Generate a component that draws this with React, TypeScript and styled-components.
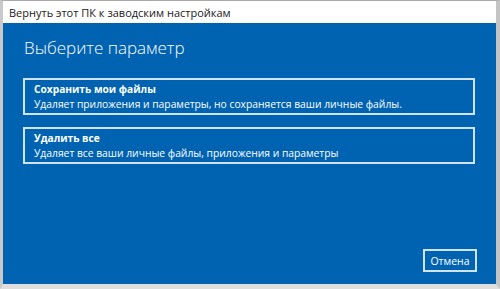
import React from "react";
import styled, { createGlobalStyle } from "styled-components";

const GlobalStyle = createGlobalStyle`
  html, body {
    margin: 0;
    padding: 0;
    background: #ffffff;
  }
  body {
    font-family: "Open Sans", "Noto Sans", "Liberation Sans", sans-serif;
  }
`;

const options = [
  {
    title: "Сохранить мои файлы",
    text: "Удаляет приложения и параметры, но сохраняется ваши личные файлы.",
  },
  {
    title: "Удалить все",
    text: "Удаляет все ваши личные файлы, приложения и параметры",
  },
];

const App = () => {
  return (
    <>
      <GlobalStyle />
      <Window>
        <TitleBar>Вернуть этот ПК к заводским настройкам</TitleBar>
        <Panel>
          <Heading>Выберите параметр</Heading>
          <OptionList>
            {options.map((item, index) => (
              <Option key={index}>
                <OptionTitle>{item.title}</OptionTitle>
                <OptionText>{item.text}</OptionText>
              </Option>
            ))}
          </OptionList>
          <Footer>
            <CancelButton>Отмена</CancelButton>
          </Footer>
        </Panel>
      </Window>
    </>
  );
};

const Window = styled.div`
  box-sizing: border-box;
  width: 500px;
  height: 289px;
  display: flex;
  flex-direction: column;
  background: #f2f2f2;
  border-top: 1px solid #a9a9a9;
  border-left: 3px solid #c9c9c9;
  border-right: 4px solid #c4c4c4;
  border-bottom: 5px solid #dedede;
`;

const TitleBar = styled.div`
  height: 22px;
  flex: none;
  display: flex;
  align-items: center;
  padding-left: 6px;
  background: #ffffff;
  color: #1a1a1a;
  font-size: 11px;
`;

const Panel = styled.div`
  flex: 1;
  display: flex;
  flex-direction: column;
  background: #0063b1;
  padding: 13px 21px 12px 20px;
`;

const Heading = styled.h1`
  margin: 0 0 18px 1px;
  font-size: 17px;
  font-weight: 300;
  line-height: 24px;
  color: #ffffff;
`;

const OptionList = styled.div`
  display: flex;
  flex-direction: column;
  gap: 12px;
`;

const Option = styled.div`
  box-sizing: border-box;
  height: 37px;
  border: 2px solid #cfe3f5;
  padding: 3px 9px;
  display: flex;
  flex-direction: column;
  justify-content: center;
  color: #ffffff;
`;

const OptionTitle = styled.div`
  font-size: 10.2px;
  font-weight: 700;
  line-height: 15px;
`;

const OptionText = styled.div`
  font-size: 10.3px;
  line-height: 15px;
`;

const Footer = styled.div`
  margin-top: auto;
  display: flex;
  justify-content: flex-end;
`;

const CancelButton = styled.button`
  box-sizing: border-box;
  width: 54px;
  height: 23px;
  margin-right: -2px;
  background: transparent;
  border: 2px solid #cfe3f5;
  color: #ffffff;
  font-family: inherit;
  font-size: 10.5px;
  padding: 0;
`;

export default App;
